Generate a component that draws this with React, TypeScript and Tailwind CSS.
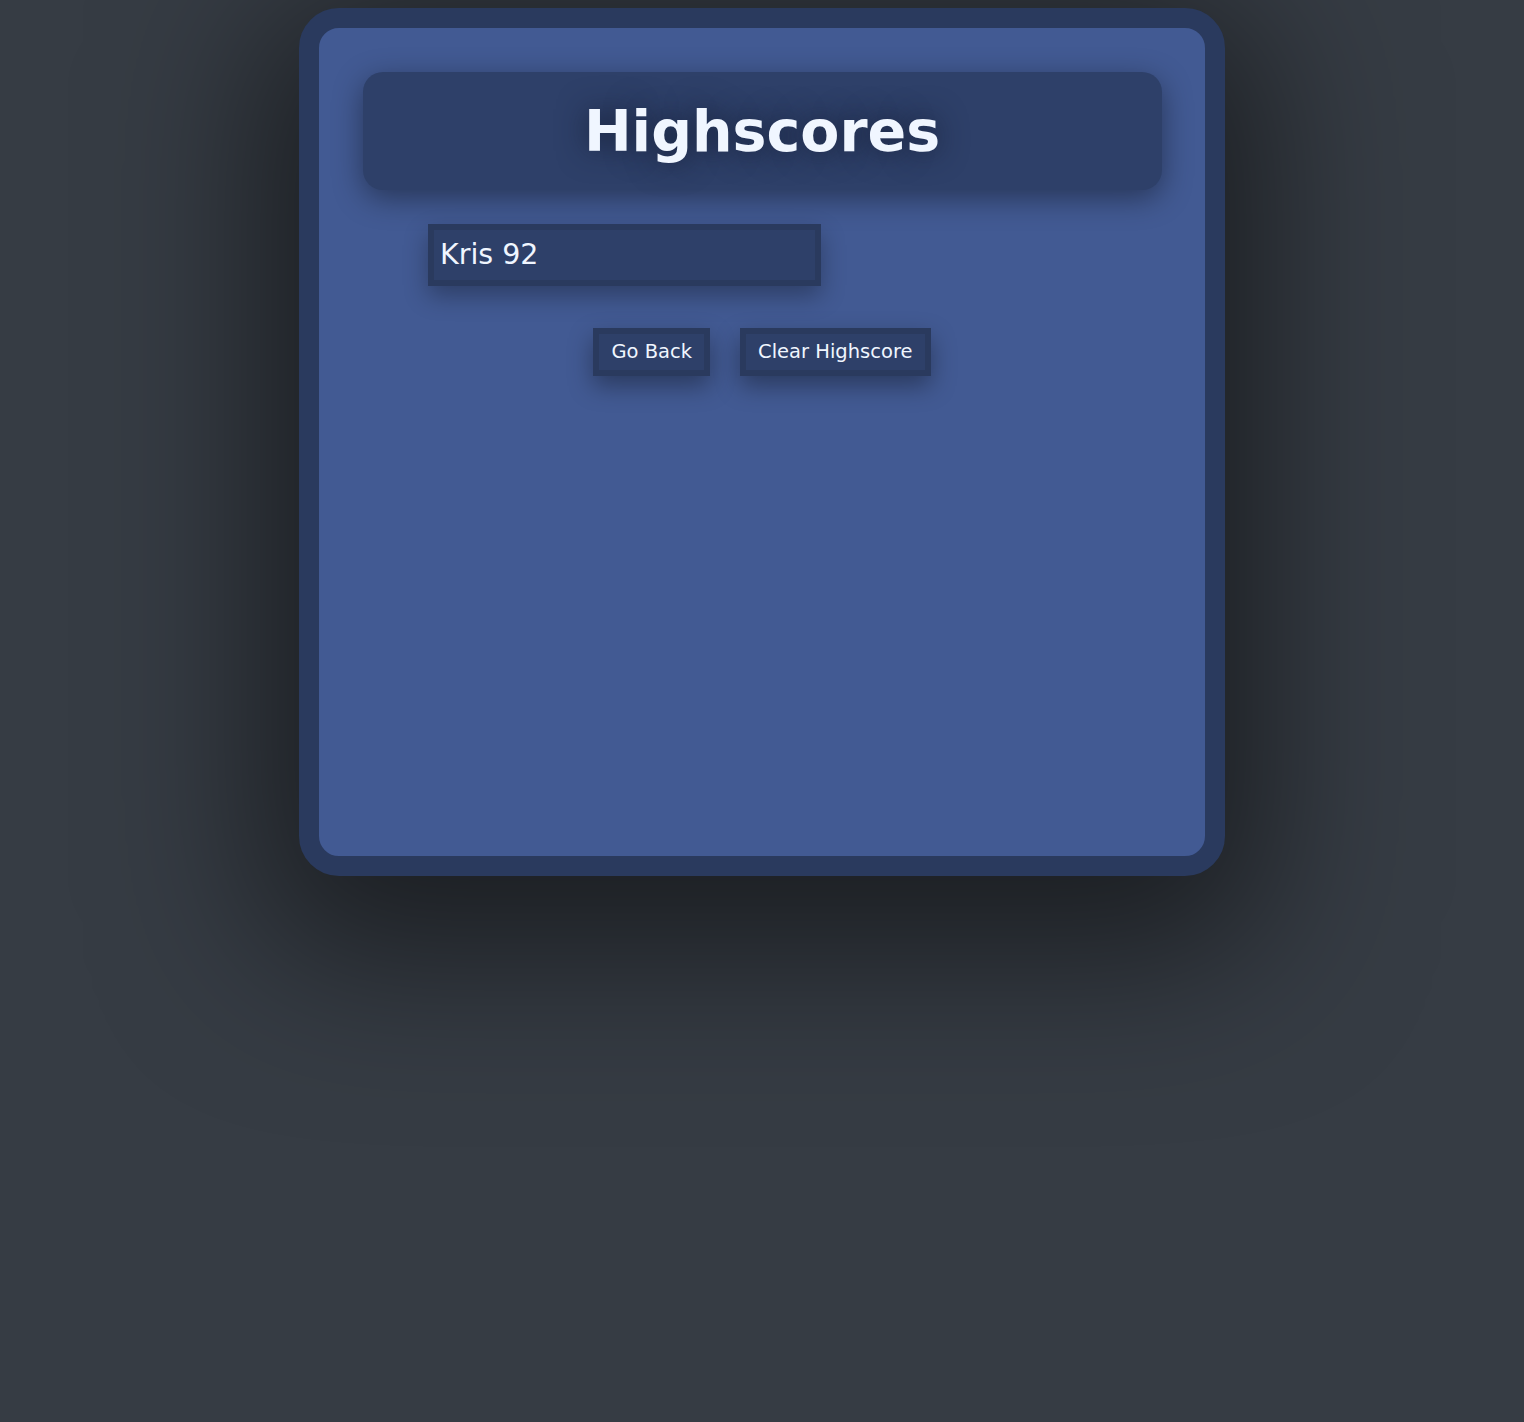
export default function App() {
  return (
    <div
      className="min-h-[1422px] w-full bg-[#363c44] pt-2"
      style={{ fontFamily: '"DejaVu Sans", Verdana, sans-serif' }}
    >
      <div className="mx-auto flex h-[868px] w-[926px] flex-col items-center rounded-[40px] border-[20px] border-[#2a3a5e] bg-[#425a93] shadow-[0_40px_160px_40px_rgba(0,0,0,0.5)]">
        <div className="mt-[44px] flex h-[118px] w-[799px] items-center justify-center rounded-[20px] bg-[#2e4069] shadow-[0_8px_30px_rgba(0,0,0,0.4)]">
          <h1 className="text-[57px] font-bold leading-none text-[#f0f6ff] [text-shadow:0_0_30px_rgba(20,28,50,0.9)]">
            Highscores
          </h1>
        </div>
        <div className="mt-[34px] w-full pl-[109px]">
          <div className="h-[62px] w-[393px] border-[6px] border-[#2a3a5e] bg-[#2e4069] px-[6px] text-[28.5px] leading-[50px] text-[#f0f6ff] shadow-[0_10px_25px_rgba(0,0,0,0.3)]">
            Kris 92
          </div>
        </div>
        <div className="mt-[42px] flex gap-[30px]">
          <button className="h-[48px] border-[6px] border-[#2a3a5e] bg-[#2e4069] px-[12px] text-[19.5px] text-[#f0f6ff] shadow-[0_10px_25px_rgba(0,0,0,0.35)]">
            Go Back
          </button>
          <button className="h-[48px] border-[6px] border-[#2a3a5e] bg-[#2e4069] px-[12px] text-[19.5px] text-[#f0f6ff] shadow-[0_10px_25px_rgba(0,0,0,0.35)]">
            Clear Highscore
          </button>
        </div>
      </div>
    </div>
  );
}
